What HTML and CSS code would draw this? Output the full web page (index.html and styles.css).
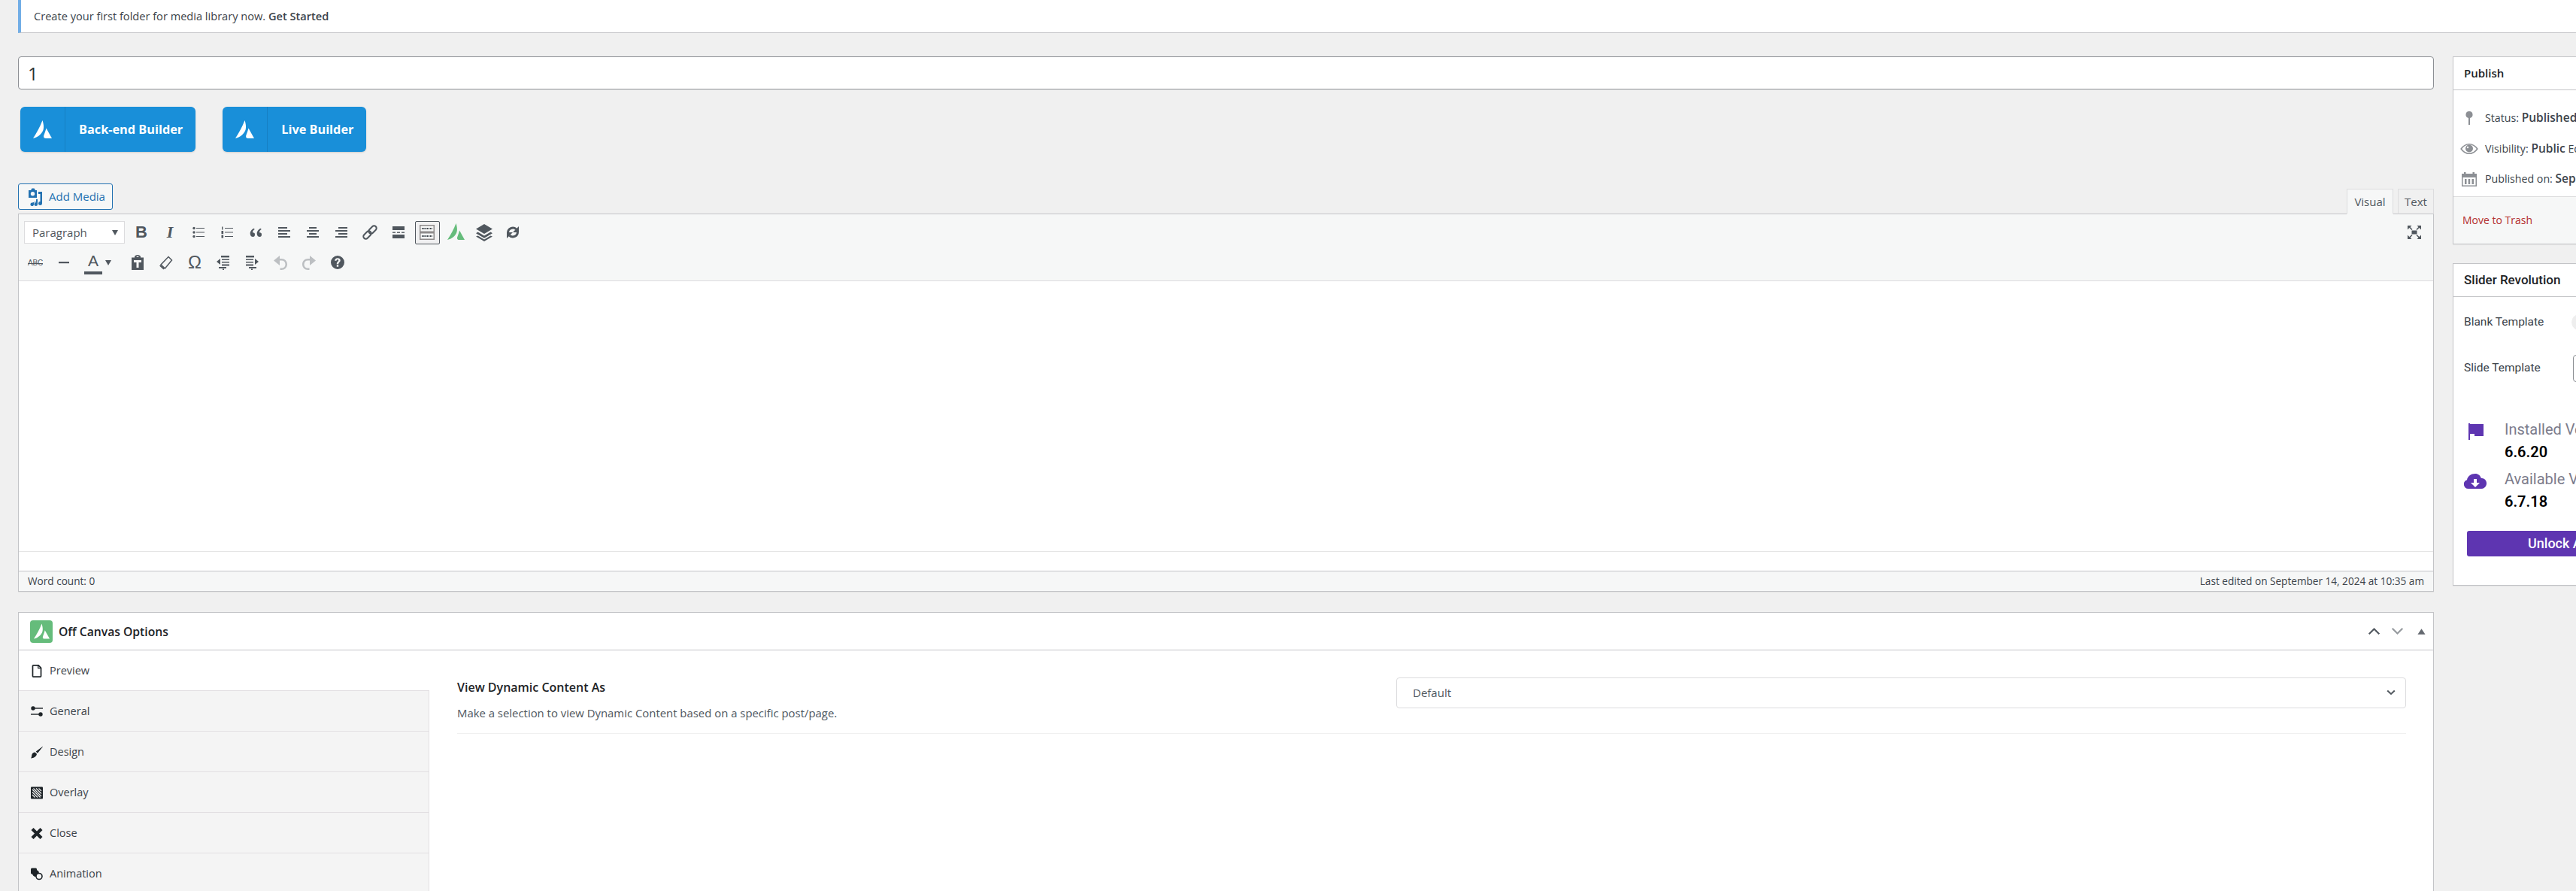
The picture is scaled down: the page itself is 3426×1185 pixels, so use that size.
FILE: index.html
```html
<!DOCTYPE html>
<html lang="en">
<head>
<meta charset="utf-8">
<title>Edit Off Canvas</title>
<link rel="stylesheet" href="styles.css">
</head>
<body>
<svg class="defs" width="0" height="0" aria-hidden="true">
  <symbol id="avada" viewBox="0 0 25 24"><path d="M12.5 0C14 5 14.6 9 13.6 12.6 12.3 17.3 7 22.6 0 24 4.5 17 9.5 8 12.5 0z"/><path d="M17.5 10.5L25 24H17C13.6 24 13.8 21 14.8 18.8 15.6 16.8 16.7 13.5 17.5 10.5z"/></symbol>
</svg>
<div class="notice">Create your first folder for media library now. <b>Get Started</b></div>
<div class="columns">
  <main class="main">
    <input class="title" value="1" aria-label="Title">
    <div class="builders">
      <a class="builder"><span class="builder-ico"><svg class="logo-w"><use href="#avada"/></svg></span><span class="builder-txt">Back-end Builder</span></a>
      <a class="builder"><span class="builder-ico"><svg class="logo-w"><use href="#avada"/></svg></span><span class="builder-txt">Live Builder</span></a>
    </div>
    <div class="media-row">
      <a class="add-media">
        <svg class="ico-media" viewBox="0 0 20 24"><path fill="#2271b1" fill-rule="evenodd" d="M1 3h3l1.500-2.500h3L10 3h2v10H1zm5.500 2a2.700 2.700 0 100 5.400 2.700 2.700 0 000-5.400z"/><path fill="#2271b1" d="M14 5h5v15.500a2.500 2.500 0 11-2.500-2.400V8H14zM6 19.500l5-1.500v-3h2v6.500a2.300 2.300 0 11-2-2.200v-.8l-3 1V22a2.300 2.300 0 11-2-2.500z"/></svg>
        Add Media
      </a>
      <div class="tabs"><span class="tab tab-on">Visual</span><span class="tab">Text</span></div>
    </div>
    <section class="editor">
      <div class="toolbar">
        <div class="tb-row">
          <div class="format">Paragraph<i class="caret"></i></div>
          <span class="tb tb-b">B</span>
          <span class="tb tb-i">I</span>
          <span class="tb"><svg class="ico20" viewBox="0 0 20 20"><g class="f"><circle cx="4" cy="4.500" r="1.700"/><circle cx="4" cy="10" r="1.700"/><circle cx="4" cy="15.500" r="1.700"/><rect x="7" y="4" width="11" height="1"/><rect x="7" y="9.500" width="11" height="1"/><rect x="7" y="15" width="11" height="1"/></g></svg></span>
          <span class="tb"><svg class="ico20" viewBox="0 0 20 20"><g class="f"><rect x="7" y="4" width="11" height="1"/><rect x="7" y="9.500" width="11" height="1"/><rect x="7" y="15" width="11" height="1"/><rect x="3" y="2.500" width="1.400" height="4"/><rect x="2.500" y="8" width="2.600" height="4"/><rect x="2.500" y="13.500" width="2.600" height="4"/></g></svg></span>
          <span class="tb"><svg class="ico20" viewBox="0 0 20 20"><g class="f"><path d="M9 12.900c0-.7-.2-1.300-.6-1.800-.6-.7-1.700-.8-2.400-.7-.3-1.600 1-3.500 2.800-4.400L7.500 4.800C4.900 6 2.300 8.900 2.800 12.400 3 14.600 4.700 16 6.500 16 8.100 16 9 14.700 9 12.900z"/><path d="M18 12.900c0-.7-.2-1.300-.6-1.800-.6-.7-1.700-.8-2.400-.7-.3-1.600 1-3.500 2.800-4.400L16.500 4.800C13.900 6 11.300 8.900 11.800 12.400 12 14.600 13.700 16 15.500 16 17.100 16 18 14.700 18 12.900z"/></g></svg></span>
          <span class="tb"><svg class="ico20" viewBox="0 0 20 20"><g class="f"><rect x="2" y="3" width="12" height="2"/><rect x="2" y="7" width="16" height="2"/><rect x="2" y="11" width="12" height="2"/><rect x="2" y="15" width="16" height="2"/></g></svg></span>
          <span class="tb"><svg class="ico20" viewBox="0 0 20 20"><g class="f"><rect x="5" y="3" width="10" height="2"/><rect x="2" y="7" width="16" height="2"/><rect x="5" y="11" width="10" height="2"/><rect x="2" y="15" width="16" height="2"/></g></svg></span>
          <span class="tb"><svg class="ico20" viewBox="0 0 20 20"><g class="f"><rect x="6" y="3" width="12" height="2"/><rect x="2" y="7" width="16" height="2"/><rect x="6" y="11" width="12" height="2"/><rect x="2" y="15" width="16" height="2"/></g></svg></span>
          <span class="tb"><svg class="ico20" viewBox="0 0 20 20"><g class="s" transform="rotate(45 10 10)"><rect x="6.800" y="-1" width="6.400" height="12" rx="3.200"/><rect x="6.800" y="9" width="6.400" height="12" rx="3.200"/></g></svg></span>
          <span class="tb"><svg class="ico20" viewBox="0 0 20 20"><g class="f"><rect x="2" y="2" width="16" height="5"/><rect x="2" y="13" width="16" height="5"/><rect x="2" y="9.500" width="4" height="1.400"/><rect x="8" y="9.500" width="4" height="1.400"/><rect x="14" y="9.500" width="4" height="1.400"/></g></svg></span>
          <span class="tb"><span class="tb-box"><svg class="ico20" viewBox="0 0 20 20"><rect x="0" y="0" width="20" height="20" fill="#8f8b8b"/><rect x="1.500" y="1.500" width="17" height="7" fill="#f6f7f7"/><rect x="1.500" y="11.500" width="17" height="7" fill="#f6f7f7"/><path d="M3 5h14M3 15h14" stroke="#3c434a" stroke-width="2" stroke-dasharray="1.400 .8"/></svg></span></span>
          <span class="tb"><svg class="logo-g"><use href="#avada"/></svg></span>
          <span class="tb"><svg class="ico24" viewBox="0 0 24 24"><g class="f"><path d="M12 1l11 6.500-11 6.500L1 7.500z"/><path d="M3.500 11.500L12 16.500l8.500-5 2.500 1.800-11 6.500-11-6.500z"/><path d="M3.500 16.500L12 21.500l8.500-5 2.500 1-11 6.500-11-6.500z"/></g></svg></span>
          <span class="tb"><svg class="ico20" viewBox="0 0 20 20"><path class="s3" d="M3.500 10.500A6.500 6.500 0 0 1 14.500 5.800M16.500 9.500A6.500 6.500 0 0 1 5.500 14.200"/><path class="f" d="M18 2v8h-8zM2 18v-8h8z"/></svg></span>
          <span class="tb tb-end"><svg class="ico20" viewBox="0 0 20 20"><g class="f"><rect x="6.500" y="7.500" width="7" height="5"/><path d="M1 1h5.500L4.600 2.900 7.500 6 6.500 7 3.400 4.100 1 6.500zM19 1v5.500l-2.400-2.400L13.500 7l-1-1 2.900-3.100L13.500 1zM1 19v-5.500l2.400 2.400L6.500 13l1 1-2.900 3.100L6.500 19zM19 19h-5.500l1.900-1.900L12.500 14l1-1 3.100 2.900 2.400-2.400z"/></g></svg></span>
        </div>
        <div class="tb-row">
          <span class="tb tb-abc">ABC</span>
          <span class="tb"><svg class="ico20" viewBox="0 0 20 20"><rect class="f" x="3" y="9" width="14" height="2.200"/></svg></span>
          <span class="tb-color"><span class="tb-a">A</span><i class="caret"></i></span>
          <span class="tb"><svg class="ico20" viewBox="0 0 20 20"><path class="f" d="M2 3.500h4V2.500C6 1 8 0 10 0s4 1 4 2.500v1h4V20H2zM8.500 3h3c0-.7-.5-1.200-1.500-1.200S8.500 2.300 8.500 3zM5 7v3h3.500v7h3v-7H15V7z"/></svg></span>
          <span class="tb"><svg class="ico20" viewBox="0 0 20 20"><path class="s2" d="M13 2.500l4.500 4.500-9 11L3 13z"/><path class="f" d="M2.500 13.500l5.500 4.500-1.600 1.600L1 14.500z"/></svg></span>
          <span class="tb tb-o">Ω</span>
          <span class="tb"><svg class="ico20" viewBox="0 0 20 20"><g class="f"><rect x="7" y="1" width="11" height="2.400"/><rect x="8" y="5.500" width="10" height="1.500"/><rect x="8" y="9" width="10" height="1.500"/><rect x="8" y="12.500" width="10" height="2"/><rect x="4" y="16" width="10" height="2"/><rect x="9" y="18.500" width="2" height="1.500"/><path d="M1 9l5-4v8z"/></g></svg></span>
          <span class="tb"><svg class="ico20" viewBox="0 0 20 20"><g class="f"><rect x="2" y="1" width="11" height="2.400"/><rect x="2" y="5.500" width="10" height="1.500"/><rect x="2" y="9" width="10" height="1.500"/><rect x="2" y="12.500" width="10" height="2"/><rect x="6" y="16" width="10" height="2"/><rect x="9" y="18.500" width="2" height="1.500"/><path d="M19 9l-5-4v8z"/></g></svg></span>
          <span class="tb"><svg class="ico20" viewBox="0 0 20 20"><path class="off" d="M1 7.500L9 1v4h2.500C15.500 5 19 8 19 12.500S15.500 20 11.500 20H9.500v-2.400h2c3 0 5-2 5-5.100S14.500 7.500 11.500 7.500H9V14z"/></svg></span>
          <span class="tb"><svg class="ico20" viewBox="0 0 20 20"><path class="off" d="M19 7.500L11 1v4H8.500C4.500 5 1 8 1 12.500S4.500 20 8.500 20h2v-2.400h-2c-3 0-5-2-5-5.100S5.500 7.500 8.500 7.500H11V14z"/></svg></span>
          <span class="tb"><svg class="ico20" viewBox="0 0 20 20"><path class="f" fill-rule="evenodd" d="M10 1a9 9 0 110 18 9 9 0 010-18zM8.800 13.300v2.400h2.400v-2.400zM10 4.300c-2.300 0-3.700 1.300-3.800 3.500h2.300c.1-1 .6-1.500 1.400-1.500s1.300.5 1.300 1.200c0 1.300-2.400 1.500-2.400 4.700h2.400c0-2.300 2.500-2.400 2.500-5 0-1.800-1.400-2.900-3.700-2.900z"/></svg></span>
        </div>
      </div>
      <div class="content"></div>
      <div class="content-foot"></div>
      <div class="status"><span>Word count: 0</span><span>Last edited on September 14, 2024 at 10:35 am</span></div>
    </section>
    <section class="options">
      <header class="opt-head">
        <span class="opt-logo"><svg class="logo-s"><use href="#avada"/></svg></span>
        <h2 class="opt-title">Off Canvas Options</h2>
        <span class="opt-ctrl">
          <svg class="ctl" viewBox="0 0 20 12"><path class="chev" d="M2 10.500l8-8 8 8"/></svg>
          <svg class="ctl ctl-dim" viewBox="0 0 20 12"><path class="chev" d="M2 1.500l8 8 8-8"/></svg>
          <svg class="ctl-tri" viewBox="0 0 12 8"><path d="M6 0l5.500 8H.5z"/></svg>
        </span>
      </header>
      <div class="opt-body">
        <nav class="side-tabs">
          <a class="st st-on"><svg class="st-ico" viewBox="0 0 16 20"><path d="M2.500 1h8L14.500 5v13a1 1 0 01-1 1h-11a1 1 0 01-1-1V2a1 1 0 011-1z" fill="none" stroke="#1d2327" stroke-width="2"/><path d="M10 1v4.500h4.500" fill="none" stroke="#1d2327" stroke-width="1.500"/></svg>Preview</a>
          <a class="st"><svg class="st-ico" viewBox="0 0 16 16"><circle cx="3" cy="3.500" r="2.700"/><rect x="5" y="2.800" width="11" height="1.400"/><circle cx="13" cy="11.500" r="2.700"/><rect x="0" y="10.800" width="11" height="1.400"/></svg>General</a>
          <a class="st"><svg class="st-ico" viewBox="0 0 16 16"><path d="M15.800.2l.2.2-7 8.800-2.300-2.200zM5.600 8L8 10.300C7.500 13.500 4 15.800 0 16c.800-1 1-2 1.200-4C1.500 9.500 3.500 8 5.600 8z"/></svg>Design</a>
          <a class="st"><svg class="st-ico" viewBox="0 0 16 16"><rect width="16" height="16" rx="1"/><path d="M2 3.500L12.500 14M2 7l7 7M2 10.500L5.500 14M3.500 2L14 12.500M7 2l7 7M10.500 2L14 5.500" stroke="#f4f4f4" stroke-width="1.100" fill="none"/></svg>Overlay</a>
          <a class="st"><svg class="st-ico" viewBox="0 0 16 16"><path d="M3.500.5L8 5 12.500.5 15.500 3.500 11 8l4.500 4.500-3 3L8 11l-4.500 4.500-3-3L5 8 .5 3.500z"/></svg>Close</a>
          <a class="st"><svg class="st-ico" viewBox="0 0 16 16"><rect x="0" y="0" width="8" height="8" rx="1.500"/><circle cx="6.500" cy="7" r="4.500"/><circle cx="11" cy="11" r="4" fill="#f4f4f4" stroke="#1d2327" stroke-width="1.600"/></svg>Animation</a>
        </nav>
        <div class="opt-pane">
          <div class="field">
            <div class="field-text">
              <div class="field-label">View Dynamic Content As</div>
              <p class="field-desc">Make a selection to view Dynamic Content based on a specific post/page.</p>
            </div>
            <div class="field-select">Default<svg class="sel-chev" viewBox="0 0 12 8"><path d="M1.200 1.500L6 6l4.800-4.500" fill="none" stroke="#50575e" stroke-width="2"/></svg></div>
          </div>
        </div>
      </div>
    </section>
  </main>
  <aside class="side">
    <section class="box">
      <h2 class="box-head">Publish</h2>
      <div class="pub-rows">
        <div class="pub-row"><span class="pub-ico"><svg class="ico20" viewBox="0 0 20 20"><path class="g" d="M10 1a4.500 4.500 0 011 8.900V19H9V9.900A4.500 4.500 0 0110 1z"/></svg></span>Status: <b>Published</b> Edit</div>
        <div class="pub-row"><span class="pub-ico"><svg class="ico-eye" viewBox="0 0 24 16"><path d="M1.200 8C4 4 7.500 1.700 12 1.700S20 4 22.800 8C20 12 16.500 14.300 12 14.300S4 12 1.200 8z" fill="none" stroke="#8c8f94" stroke-width="1.600"/><circle class="g" cx="12" cy="7.500" r="5"/><circle cx="10" cy="6" r="1.200" fill="#fff"/></svg></span>Visibility: <b>Public</b> Edit</div>
        <div class="pub-row"><span class="pub-ico"><svg class="ico20" viewBox="0 0 20 20"><path class="g" fill-rule="evenodd" d="M0 3h3V1h2.500v2h9V1H17v2h3v17H0zm1.500 5v10.500h17V8zM4 10h2.500v7H4zm4.700 0h2.500v7H8.700zm4.800 0H16v7h-2.500z"/></svg></span>Published on: <b>Sep 14, 2024</b></div>
      </div>
      <div class="pub-foot"><a class="trash">Move to Trash</a></div>
    </section>
    <section class="box box-sr">
      <h2 class="box-head box-head-sr">Slider Revolution</h2>
      <div class="sr-body">
        <div class="sr-row"><span class="sr-label">Blank Template</span><span class="sr-toggle"></span></div>
        <div class="sr-row sr-row2"><span class="sr-label">Slide Template</span><span class="sr-select"></span></div>
        <div class="ver ver-1">
          <svg class="ver-ico" viewBox="0 0 30 22"><path class="p" d="M6 0h2v22H6zM8 1h18v16H14v-3H8z"/></svg>
          <div><div class="ver-l">Installed Version</div><div class="ver-v">6.6.20</div></div>
        </div>
        <div class="ver ver-2">
          <svg class="ver-ico" viewBox="0 0 30 20"><path class="p" fill-rule="evenodd" d="M15 0c3.800 0 7 2.500 7.800 6.100A6.500 6.500 0 0130 13c0 3.800-3 7-6.800 7H6a6 6 0 01-2-11.700C4.700 3.500 9.500 0 15 0zm-2 7v5H9l6 6 6-6h-4V7z"/></svg>
          <div><div class="ver-l">Available Version</div><div class="ver-v">6.7.18</div></div>
        </div>
        <a class="unlock">Unlock All Features</a>
      </div>
    </section>
  </aside>
</div>
</body>
</html>
```

FILE: styles.css
```css
* { box-sizing: border-box; }
html, body { margin: 0; height: 1185px; overflow: hidden; }
body { background: #f0f0f0; color: #3c434a; font: 14px/1.4 "Open Sans", "Noto Sans", sans-serif; width: 3426px; }
.defs { position: absolute; }
b { font-weight: 600; }

.notice { margin-left: 24px; height: 44px; background: #fff; border-left: 4px solid #72aee6; border-bottom: 1px solid #c3c4c7; padding-left: 17px; line-height: 43px; font-size: 14.600px; }

.columns { display: flex; gap: 25px; margin: 31px 0 0 24px; }
.main { flex: none; width: 3213px; }
.side { flex: none; width: 400px; }

.title { display: block; width: 100%; height: 44px; border: 1px solid #8c8f94; border-radius: 4px; background: #fff; padding: 0 12px; font: 24px "Open Sans", sans-serif; color: #2c3338; outline: 0; }

.builders { display: flex; gap: 36px; margin: 23px 0 0 3px; }
.builder { display: flex; height: 60px; background: #198fd9; border-radius: 6px; box-shadow: 0 1px 2px rgba(0,0,0,.15); color: #fff; font-weight: 700; font-size: 16.300px; align-items: stretch; }
.builder-ico { width: 60px; border-right: 1px solid #1680c4; display: flex; align-items: center; justify-content: center; }
.builder-txt { padding: 0 17px 0 18px; display: flex; align-items: center; }
.logo-w { width: 25px; height: 24px; fill: #fff; }
.logo-g { width: 23px; height: 24px; fill: #65bc7b; margin-top: -3px; }
.logo-s { width: 21px; height: 21px; fill: #fff; }

.media-row { display: flex; justify-content: space-between; height: 40px; margin-top: 42px; }
.add-media { display: flex; align-items: center; gap: 7px; width: 126px; height: 35px; padding-left: 11px; background: #f6f7f7; border: 1px solid #2271b1; border-radius: 3px; color: #2271b1; font-size: 15px; white-space: nowrap; }
.ico-media { width: 22px; height: 24px; flex: none; }
.tabs { display: flex; gap: 6px; align-items: flex-end; }
.tab { display: flex; align-items: center; justify-content: center; width: 48px; height: 34px; background: #f0f0f0; border: 1px solid #dcdcde; border-bottom: 1px solid #c3c4c7; font-size: 15px; color: #50575e; margin-bottom: -1px; position: relative; }
.tab-on { width: 62px; background: #f6f7f7; border-bottom-color: #f6f7f7; z-index: 1; }

.editor { border: 1px solid #c3c4c7; background: #fff; height: 503px; display: flex; flex-direction: column; box-shadow: 0 1px 1px rgba(0,0,0,.04); }
.toolbar { background: #f6f7f7; border-bottom: 1px solid #dcdcde; padding: 4px 6px 4px 3px; height: 89px; flex: none; }
.tb-row { display: flex; align-items: center; height: 40px; }
.format { flex: none; width: 134px; height: 30px; margin: 0 3px 0 4px; background: #fff; border: 1px solid #dcdcde; padding-left: 10px; line-height: 28px; font-size: 15px; color: #50575e; position: relative; }
.caret { position: absolute; right: 8px; top: 11px; width: 0; height: 0; border: 4px solid transparent; border-top: 7px solid #50575e; border-bottom: 0; }
.tb { flex: none; width: 38px; height: 32px; display: flex; align-items: center; justify-content: center; color: #50575e; }
.tb-end { margin-left: auto; }
.ico20 { width: 20px; height: 20px; display: block; }
.ico24 { width: 24px; height: 24px; display: block; }
.ico-eye { width: 24px; height: 16px; display: block; }
.f { fill: #50575e; }
.s { fill: none; stroke: #50575e; stroke-width: 2; }
.s2 { fill: none; stroke: #50575e; stroke-width: 1.500; }
.s3 { fill: none; stroke: #50575e; stroke-width: 3; }
.off { fill: #bcbfc2; }
.g { fill: #8c8f94; }
.p { fill: #5e35b1; }
.tb-b { font: 700 22px "Liberation Sans", sans-serif; }
.tb-i { font: italic 700 22px "Liberation Serif", serif; }
.tb-abc { font: 10px "Liberation Sans", sans-serif; text-decoration: line-through; letter-spacing: -.2px; }
.tb-o { font: 24px "Liberation Sans", sans-serif; }
.tb-box { display: flex; align-items: center; justify-content: center; width: 33px; height: 31px; border: 1px solid #50575e; border-radius: 2px; background: #f0f0f1; }
.tb-color { flex: none; width: 60px; height: 32px; position: relative; }
.tb-a { position: absolute; left: 8px; top: 0; width: 24px; height: 32px; border-bottom: 4px solid #50575e; text-align: center; font: 21px/27px "Liberation Sans", sans-serif; color: #50575e; }
.tb-color .caret { right: 16px; top: 13px; }

.content { flex: 1; background: #fff; }
.content-foot { flex: none; height: 26px; border-top: 1px solid #e5e5e5; background: #fff; }
.status { flex: none; height: 27px; display: flex; justify-content: space-between; align-items: center; padding: 0 12px; background: #f6f7f7; border-top: 1px solid #c3c4c7; font-size: 13.600px; }

.options { margin-top: 27px; height: 400px; background: #fff; border: 1px solid #c3c4c7; }
.opt-head { height: 50px; display: flex; align-items: center; padding: 0 10px 0 15px; border-bottom: 1px solid #c3c4c7; }
.opt-logo { width: 30px; height: 30px; background: #65bc7b; border-radius: 4px; display: flex; align-items: center; justify-content: center; }
.opt-title { flex: 1; margin: 0 0 0 8px; font-size: 15.700px; font-weight: 600; color: #1d2327; }
.opt-ctrl { display: flex; align-items: center; gap: 14px; }
.ctl { width: 17px; height: 11px; display: block; }
.ctl-dim { opacity: .6; }
.chev { fill: none; stroke: #50575e; stroke-width: 2.500; }
.ctl-tri { width: 11px; height: 8px; margin-left: 4px; fill: #646970; }
.opt-body { display: flex; }
.side-tabs { flex: none; width: 546px; display: flex; flex-direction: column; }
.st { height: 54px; display: flex; align-items: center; gap: 9px; padding: 2px 0 0 16px; background: #f4f4f4; border-right: 1px solid #e2dfe2; border-bottom: 1px solid #e2dfe2; font-size: 14.500px; color: #3c434a; }
.st-on { background: #fff; border-right: 0; }
.st-ico { width: 16px; height: 17px; flex: none; fill: #1d2327; }
.opt-pane { flex: 1; padding: 36px 36px 0 37px; }
.field { display: flex; justify-content: space-between; border-bottom: 1px solid #f0f0f0; height: 75px; }
.field-text { flex: none; }
.field-label { font-size: 16px; font-weight: 600; line-height: 26px; color: #1d2327; }
.field-desc { margin: 11px 0 0; font-size: 14.900px; line-height: 21px; color: #50575e; }
.field-select { flex: none; width: 1343px; height: 41px; border: 1px solid #dcdcde; border-radius: 4px; padding-left: 21px; line-height: 39px; font-size: 15px; color: #50575e; position: relative; }
.sel-chev { position: absolute; right: 13px; top: 15px; width: 12px; height: 8px; }

.box { background: #fff; border: 1px solid #c3c4c7; box-shadow: 0 1px 1px rgba(0,0,0,.04); }
.box-sr { margin-top: 25px; height: 429px; }
.box-head { margin: 0; height: 44px; padding-left: 14px; line-height: 42px; font-size: 15px; font-weight: 600; color: #1d2327; border-bottom: 1px solid #c3c4c7; }
.box-head-sr { font: 500 17px/42px Roboto, sans-serif; }
.pub-rows { padding: 17px 0 0; height: 142px; border-bottom: 1px solid #dcdcde; background: #fff; }
.pub-row { height: 40.500px; display: flex; align-items: center; font-size: 14.200px; white-space: pre; }
.pub-row b { font-size: 15.500px; }
.pub-ico { width: 42px; display: flex; justify-content: center; flex: none; }
.pub-foot { height: 62px; background: #f6f7f7; padding-left: 12px; line-height: 61px; font-size: 14px; }
.trash { color: #b32d2e; }

.sr-body { padding: 0 0 0 14px; font-family: Roboto, sans-serif; }
.sr-row { display: flex; align-items: center; height: 21px; margin-top: 23px; font-size: 15.500px; }
.sr-row2 { margin-top: 33px; height: 36px; }
.sr-label { flex: none; width: 145px; }
.sr-toggle { width: 60px; height: 21px; border-radius: 11px; background: #eee; margin-left: -2px; }
.sr-select { width: 60px; height: 36px; border: 1px solid #8c8f94; border-radius: 4px; }
.ver { display: flex; gap: 0; }
.ver-1 { margin-top: 48px; }
.ver-2 { margin-top: 6px; }
.ver-ico { flex: none; width: 30px; height: 22px; margin: 7px 24px 0 0; }
.ver-l { font-size: 20px; line-height: 30px; color: #7c7c8c; white-space: nowrap; }
.ver-v { font-size: 20px; line-height: 30px; font-weight: 600; color: #000; }
.unlock { display: block; width: 260px; height: 34px; margin: 24px 0 0 4px; background: #5e35b1; border-radius: 3px; color: #fff; font-size: 18px; font-weight: 500; line-height: 34px; padding-left: 81px; white-space: nowrap; }
```
